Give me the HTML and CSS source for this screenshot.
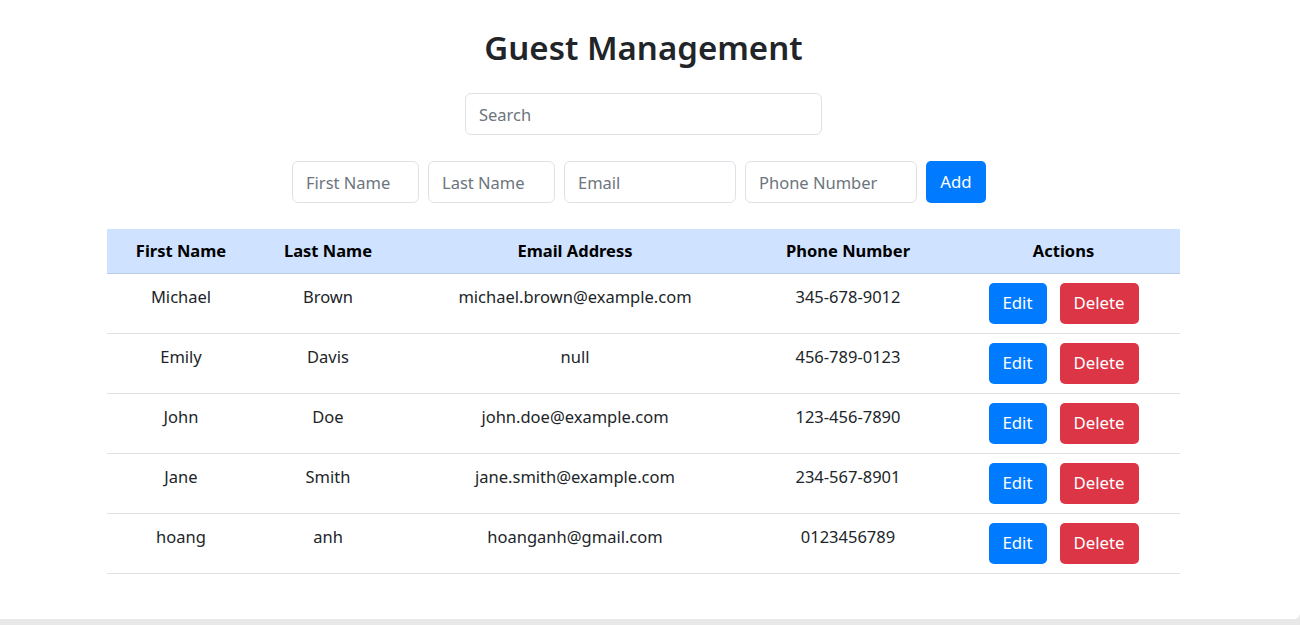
FILE: index.html
```html
<!DOCTYPE html>
<html lang="en">
<head>
<meta charset="utf-8">
<title>Guest Management</title>
<link rel="stylesheet" href="styles.css">
</head>
<body>
<div class="page">
  <h1 class="title">Guest Management</h1>
  <div class="search-row">
    <input class="field search" type="text" placeholder="Search">
  </div>
  <div class="add-row">
    <input class="field f-first" type="text" placeholder="First Name">
    <input class="field f-last" type="text" placeholder="Last Name">
    <input class="field f-email" type="text" placeholder="Email">
    <input class="field f-phone" type="text" placeholder="Phone Number">
    <button class="btn btn-primary btn-add">Add</button>
  </div>
  <table class="guests">
    <colgroup>
      <col class="c1"><col class="c2"><col class="c3"><col class="c4"><col class="c5">
    </colgroup>
    <thead>
      <tr><th>First Name</th><th>Last Name</th><th>Email Address</th><th>Phone Number</th><th>Actions</th></tr>
    </thead>
    <tbody>
      <tr><td>Michael</td><td>Brown</td><td>michael.brown@example.com</td><td>345-678-9012</td><td class="act-cell"><div class="actions"><button class="btn btn-primary btn-edit">Edit</button><button class="btn btn-danger btn-del">Delete</button></div></td></tr>
      <tr><td>Emily</td><td>Davis</td><td>null</td><td>456-789-0123</td><td class="act-cell"><div class="actions"><button class="btn btn-primary btn-edit">Edit</button><button class="btn btn-danger btn-del">Delete</button></div></td></tr>
      <tr><td>John</td><td>Doe</td><td>john.doe@example.com</td><td>123-456-7890</td><td class="act-cell"><div class="actions"><button class="btn btn-primary btn-edit">Edit</button><button class="btn btn-danger btn-del">Delete</button></div></td></tr>
      <tr><td>Jane</td><td>Smith</td><td>jane.smith@example.com</td><td>234-567-8901</td><td class="act-cell"><div class="actions"><button class="btn btn-primary btn-edit">Edit</button><button class="btn btn-danger btn-del">Delete</button></div></td></tr>
      <tr><td>hoang</td><td>anh</td><td>hoanganh@gmail.com</td><td>0123456789</td><td class="act-cell"><div class="actions"><button class="btn btn-primary btn-edit">Edit</button><button class="btn btn-danger btn-del">Delete</button></div></td></tr>
    </tbody>
  </table>
</div>
</body>
</html>
```

FILE: styles.css
```css
* { box-sizing: border-box; }
html, body { margin: 0; padding: 0; }
html { background: #e8e8e8; }
body {
  font-family: "Segoe UI", "Noto Sans", "Open Sans", sans-serif;
  font-size: 17.6px;
  line-height: 1.5;
  color: #212529;
}
.page {
  background: #fff;
  height: 619px;
  overflow: hidden;
  border-bottom-right-radius: 6px;
  padding-top: 22px;
  padding-right: 13px;
}
.title {
  margin: 0;
  text-align: center;
  font-size: 33px;
  font-weight: 600;
  line-height: 52px;
  color: #212529;
}
.search-row {
  display: flex;
  justify-content: center;
  margin-top: 19px;
}
.field {
  height: 42px;
  border: 1px solid #dee2e6;
  border-radius: 6px;
  padding: 0 13px;
  font: inherit;
  font-size: 16.5px;
  color: #212529;
  background: #fff;
  outline: none;
}
.field::placeholder { color: #6c757d; }
.search { width: 357px; }
.add-row {
  display: flex;
  justify-content: center;
  gap: 9px;
  margin-top: 26px;
  padding-right: 9px;
}
.f-first, .f-last { width: 127px; }
.f-email, .f-phone { width: 172px; }
.btn {
  border: 0;
  border-radius: 5px;
  color: #fff;
  font: inherit;
  font-size: 16.8px;
  height: 42px;
  padding: 0 13px;
  cursor: pointer;
}
.btn-primary { background: #007bff; }
.btn-danger { background: #dc3545; }
.btn-add { width: 60px; }
.guests {
  margin: 26px auto 0;
  width: 1073px;
  border-collapse: collapse;
  table-layout: fixed;
}
.c1 { width: 148px; }
.c2 { width: 146px; }
.c3 { width: 348px; }
.c4 { width: 198px; }
.c5 { width: 233px; }
.guests th {
  background: #cfe2ff;
  color: #000;
  font-weight: 700;
  font-size: 16.5px;
  height: 44px;
  padding: 2px 9px 0;
  text-align: center;
  vertical-align: middle;
  border-bottom: 1px solid #b9cbe5;
}
.guests td {
  height: 60px;
  padding: 11px 9px 6px;
  text-align: center;
  vertical-align: top;
  font-size: 16.5px;
  border-bottom: 1px solid #dee2e6;
}
.guests td.act-cell { padding-top: 9px; padding-bottom: 8px; }
.actions {
  display: flex;
  justify-content: center;
  gap: 13px;
}
.btn-edit { width: 58px; height: 41px; }
.btn-del { width: 79px; height: 41px; }
```
